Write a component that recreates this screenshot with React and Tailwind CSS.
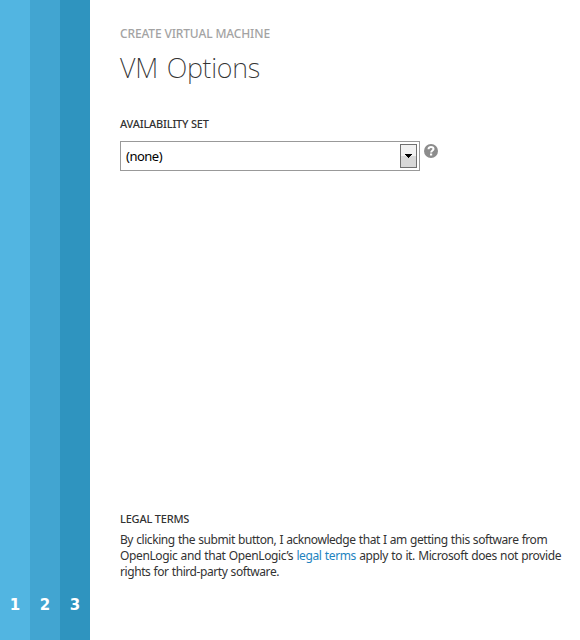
import React from 'react';

const steps = [
  { n: '1', tone: 'bg-[#52b5e1]' },
  { n: '2', tone: 'bg-[#42a5d1]' },
  { n: '3', tone: 'bg-[#2f94bf]' },
];

function StepRail() {
  return (
    <nav className="flex h-full w-[90px] shrink-0">
      {steps.map((s) => (
        <div key={s.n} className={`flex w-[30px] items-end justify-center pb-[25px] ${s.tone}`}>
          <span className="font-['DejaVu_Sans',sans-serif] text-[15px] font-bold leading-5 text-white">{s.n}</span>
        </div>
      ))}
    </nav>
  );
}

function SelectBox() {
  return (
    <div className="flex h-[30px] w-[300px] items-center justify-between border border-[#999] bg-white pl-[5px] pr-[2px]">
      <span className="text-[13px] leading-4 tracking-[-0.5px] text-black">(none)</span>
      <button className="flex h-6 w-[17px] items-center justify-center border border-[#707070] bg-linear-to-b from-[#f2f2f2] from-50% to-[#d8d8d8] to-50%">
        <svg width="7" height="4" viewBox="0 0 7 4" shapeRendering="crispEdges">
          <path d="M0 0h7v1H6v1H5v1H4v1H3V3H2V2H1V1H0z" fill="#000" />
        </svg>
      </button>
    </div>
  );
}

function HelpIcon() {
  return (
    <svg className="ml-1 mt-[3px]" width="14" height="14" viewBox="0 0 14 14">
      <circle cx="7" cy="7" r="7" fill="#8c8c8c" />
      <path d="M4.500 5.300C4.500 3.700 5.500 3.100 7 3.100s2.500.6 2.500 1.900C9.500 6.500 7.100 6.500 7.100 8.600" fill="none" stroke="#fff" strokeWidth="2" />
      <path d="M6 9.500h2.200v2H6z" fill="#fff" />
    </svg>
  );
}

export default function App() {
  return (
    <div className="flex h-[640px] w-[580px] overflow-hidden bg-white font-['Noto_Sans',sans-serif] text-[#333]">
      <StepRail />
      <main className="flex flex-1 flex-col whitespace-nowrap pl-[30px]">
        <p className="mt-[26px] text-[12px] font-medium leading-4 tracking-[-0.14px] text-[#a3a3a3]">CREATE VIRTUAL MACHINE</p>
        <h1 className="mt-[8px] text-[27px] font-extralight leading-9 tracking-[-0.25px] text-[#333] [word-spacing:2px]">VM Options</h1>
        <h2 className="mt-[30px] text-[11px] font-medium leading-4 tracking-[-0.2px]">AVAILABILITY SET</h2>
        <div className="mt-[9px] flex">
          <SelectBox />
          <HelpIcon />
        </div>
        <h2 className="mt-[340px] text-[11px] font-medium leading-4 tracking-[-0.2px]">LEGAL TERMS</h2>
        <div className="mt-[5px] text-[12px] leading-4 [word-spacing:0.5px]">
          <p className="tracking-[-0.44px]">By clicking the submit button, I acknowledge that I am getting this software from</p>
          <p className="tracking-[-0.375px]">
            OpenLogic and that OpenLogic’s <a className="text-[#1e83c0]">legal terms</a> apply to it. Microsoft does not provide
          </p>
          <p className="tracking-[-0.43px]">rights for third-party software.</p>
        </div>
      </main>
    </div>
  );
}
